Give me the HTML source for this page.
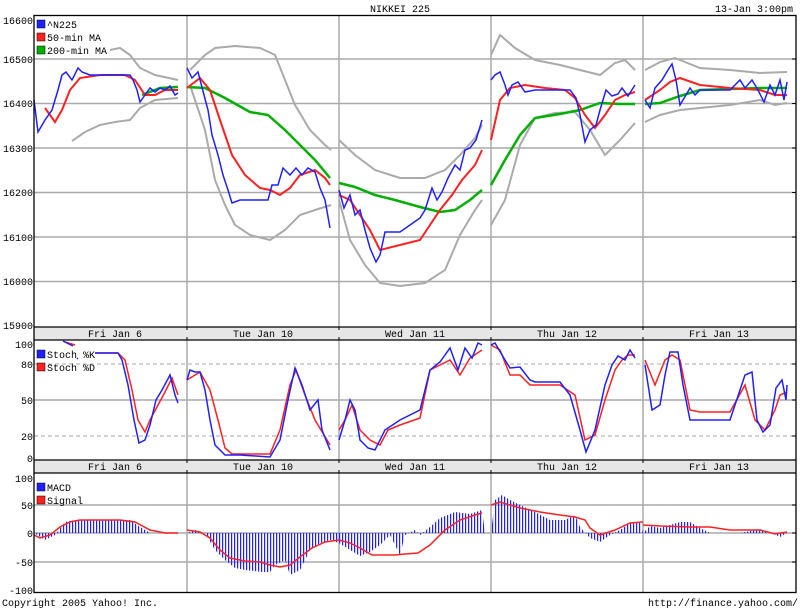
<!DOCTYPE html>
<html><head><meta charset="utf-8"><style>
html,body{margin:0;padding:0;background:#fff}
svg{display:block}
text{font-family:"Liberation Mono","DejaVu Sans Mono",monospace;font-size:10px;fill:#000}
</style></head><body>
<svg width="800" height="608" viewBox="0 0 800 608" xmlns="http://www.w3.org/2000/svg">
<defs>
<pattern id="bars" width="3" height="10" patternUnits="userSpaceOnUse"><rect x="0" y="0" width="1.2" height="10" fill="#2020ff"/></pattern>
</defs>
<text x="400" y="12" text-anchor="middle">NIKKEI 225</text>
<text x="793" y="12" text-anchor="end">13-Jan 3:00pm</text>

<g stroke="#aaa" stroke-width="1.5" fill="none">
<path d="M34 59H796M34 103.5H796M34 148H796M34 192.5H796M34 237H796M34 281.5H796"/>
<path d="M187 16V327M339 16V327M491 16V327M643 16V327"/>
<path d="M187 340V460M339 340V460M491 340V460M643 340V460M34 400H796"/>
<path d="M187 473V592M339 473V592M491 473V592M643 473V592M34 505H796M34 533H796M34 562H796"/>
</g>
<g stroke="#aaa" stroke-width="1" stroke-dasharray="4,3" fill="none"><path d="M34 364H796M34 436H796"/></g>

<rect x="34" y="327" width="762" height="13" fill="#e6e6e6"/>
<rect x="34" y="460" width="762" height="13" fill="#e6e6e6"/>
<g>
<text x="115" y="337" text-anchor="middle">Fri Jan  6</text><text x="263" y="337" text-anchor="middle">Tue Jan 10</text><text x="415" y="337" text-anchor="middle">Wed Jan 11</text><text x="567" y="337" text-anchor="middle">Thu Jan 12</text><text x="719" y="337" text-anchor="middle">Fri Jan 13</text>
<text x="115" y="470" text-anchor="middle">Fri Jan  6</text><text x="263" y="470" text-anchor="middle">Tue Jan 10</text><text x="415" y="470" text-anchor="middle">Wed Jan 11</text><text x="567" y="470" text-anchor="middle">Thu Jan 12</text><text x="719" y="470" text-anchor="middle">Fri Jan 13</text>
</g>

<g text-anchor="end">
<text x="33" y="24">16600</text><text x="33" y="63">16500</text><text x="33" y="107">16400</text><text x="33" y="152">16300</text><text x="33" y="196">16200</text><text x="33" y="241">16100</text><text x="33" y="285">16000</text><text x="33" y="329">15900</text>
<text x="33" y="348">100</text><text x="33" y="368">80</text><text x="33" y="404">50</text><text x="33" y="440">20</text><text x="33" y="462">0</text>
<text x="33" y="482">100</text><text x="33" y="509">50</text><text x="33" y="537">0</text><text x="33" y="566">-50</text><text x="33" y="594">-100</text>
</g>

<g stroke="#aaa" stroke-width="2" fill="none">
<path d="M72 141L85 132L100 125L115 122L130 120L140 108L155 100L178 98"/>
<path d="M110 50L120 48L130 55L140 68L155 75L178 80"/>
<path d="M190 70L205 55L215 48L235 46L260 48L275 55L285 80L295 105L310 130L325 145L331 150"/>
<path d="M190 85L205 130L215 180L225 205L235 225L250 235L270 240L285 230L300 215L315 210L331 205"/>
<path d="M339 140L355 155L375 170L400 178L425 178L445 170L460 155L475 138L482 125"/>
<path d="M339 200L350 240L365 265L380 283L400 286L425 283L445 270L460 235L475 210L482 200"/>
<path d="M491 55L500 35L515 48L535 60L560 65L580 70L600 75L615 63L625 60L635 70"/>
<path d="M491 225L505 200L520 145L535 118L555 113L575 112L590 130L605 155L620 140L635 123"/>
<path d="M645 70L660 62L675 58L700 68L730 70L760 73L787 72"/>
<path d="M645 122L660 115L680 110L700 108L730 105L760 100L775 105L787 103"/>
</g>
<g stroke="#00b000" stroke-width="2.5" fill="none">
<path d="M142 95L160 88L178 87"/>
<path d="M187 87L205 88L225 98L250 112L268 115L285 130L300 145L315 160L330 178"/>
<path d="M339 183L355 187L375 195L395 200L420 207L440 212L455 210L470 200L482 190"/>
<path d="M491 185L505 160L520 135L535 118L560 114L580 110L600 103L620 104L635 104"/>
<path d="M645 104L660 103L680 96L700 90L730 89L760 88L787 88"/>
</g>
<g stroke="#ff2020" stroke-width="2" fill="none">
<path d="M45 108L55 122L62 110L70 90L80 78L100 75L125 75L135 80L145 95L155 95L165 90L178 90"/>
<path d="M187 88L200 78L210 90L220 120L232 155L245 175L260 188L270 190L280 195L290 188L300 175L315 170L325 178L330 185"/>
<path d="M339 195L350 200L360 215L370 230L380 250L400 245L420 240L430 225L440 210L452 195L462 180L475 165L482 150"/>
<path d="M491 140L500 100L510 88L525 85L545 88L565 90L575 98L585 115L595 128L605 115L615 100L625 95L635 92"/>
<path d="M645 100L660 90L670 82L680 78L700 85L730 88L760 90L775 95L787 95"/>
</g>
<g stroke="#2020ff" stroke-width="1.5" fill="none">
<path d="M34 100L38 132L45 120L52 110L58 90L62 75L66 72L72 80L78 68L82 72L90 75L110 75L130 75L133 80L137 90L140 102L145 95L150 88L155 92L160 88L165 90L170 86L175 95L178 93"/>
<path d="M187 68L192 78L198 72L204 95L208 110L212 135L218 155L223 175L228 190L232 203L240 200L255 200L268 200L272 185L278 185L283 168L290 175L296 168L302 175L308 168L315 172L320 188L325 200L330 228"/>
<path d="M339 190L344 208L350 195L355 215L360 210L365 230L370 248L376 262L380 255L385 232L400 232L410 225L420 218L425 210L432 188L437 200L442 192L448 178L455 165L460 170L465 150L470 148L476 140L482 120"/>
<path d="M491 80L495 75L500 72L505 85L508 95L512 85L518 82L525 92L535 90L555 90L570 90L576 98L580 115L585 142L590 130L596 125L600 110L606 90L612 96L618 94L622 88L628 96L635 85"/>
<path d="M645 100L650 108L655 88L662 80L668 70L672 64L676 80L680 105L686 95L690 88L695 95L700 90L710 90L730 90L740 80L745 88L752 80L758 90L764 102L770 85L775 95L780 80L784 100L787 82"/>
</g>
<rect x="37" y="20" width="8" height="8" fill="#2020ff" stroke="#000" stroke-width="0.5"/><text x="47" y="28">^N225</text>
<rect x="37" y="33" width="8" height="8" fill="#ff2020" stroke="#000" stroke-width="0.5"/><text x="47" y="41">50-min MA</text>
<rect x="37" y="46" width="8" height="8" fill="#00b000" stroke="#000" stroke-width="0.5"/><text x="47" y="54">200-min MA</text>

<g stroke="#ff2020" stroke-width="1.5" fill="none">
<path d="M65 342L75 345M95 353L118 353L125 360L132 390L138 420L145 432L150 420L158 405L165 392L172 378L178 395"/>
<path d="M187 380L195 375L200 372L210 390L218 420L225 448L232 454L270 454L280 430L290 385L296 370L305 395L315 420L330 445"/>
<path d="M339 430L345 420L352 405L360 430L370 440L380 445L388 430L400 425L420 418L430 370L440 365L450 360L460 375L470 358L482 350"/>
<path d="M491 345L500 350L510 375L520 375L530 385L560 385L575 395L585 440L595 435L605 400L615 370L622 360L628 355L635 355"/>
<path d="M645 360L655 385L665 360L672 355L680 360L690 410L700 412L730 412L745 385L755 420L765 430L775 410L780 395L787 392"/>
</g>
<g stroke="#2020ff" stroke-width="1.5" fill="none">
<path d="M63 341L73 346M77 358L78 359M95 353L118 353L122 360L128 385L134 420L139 443L145 440L150 425L156 400L162 390L170 375L175 395L178 403"/>
<path d="M187 380L190 370L195 372L200 372L205 390L210 420L215 445L225 455L240 455L270 457L280 440L288 400L295 368L302 385L310 410L318 400L322 430L330 450"/>
<path d="M339 440L345 420L350 400L355 410L360 440L368 448L375 450L385 430L400 420L420 410L430 370L440 362L450 348L458 370L465 348L472 358L478 343L482 345"/>
<path d="M491 345L495 343L505 360L510 368L520 367L530 380L535 382L560 382L570 395L580 430L586 452L595 430L605 385L612 365L618 356L625 360L630 350L635 358"/>
<path d="M645 365L652 410L660 405L665 375L670 352L678 352L683 385L690 420L700 420L730 420L745 375L752 372L757 420L763 432L770 425L776 388L782 380L786 400L787 385"/>
</g>
<rect x="37" y="350" width="8" height="8" fill="#2020ff" stroke="#000" stroke-width="0.5"/><text x="47" y="358">Stoch %K</text>
<rect x="37" y="363" width="8" height="8" fill="#ff2020" stroke="#000" stroke-width="0.5"/><text x="47" y="371">Stoch %D</text>

<path fill="url(#bars)" d="M34 533L45 540L55 535L65 522L75 520L130 520L140 527L150 533L178 533Z"/>
<path fill="url(#bars)" d="M187 533L195 530L205 533L215 550L225 560L235 568L245 570L262 572L270 572L275 565L285 560L290 575L300 570L310 550L320 543L330 540L339 543L350 550L360 556L370 552L380 545L390 535L400 555L405 535L415 530L420 535L430 527L440 518L455 512L470 514L482 510L485 533Z"/>
<path fill="url(#bars)" d="M491 533L495 500L502 495L510 500L520 505L535 512L550 520L565 520L575 515L580 527L590 538L600 542L610 535L620 530L630 523L640 523L643 533Z"/>
<path fill="url(#bars)" d="M643 533L650 526L660 528L670 525L680 522L690 522L700 528L710 533L720 533L740 533L755 530L770 532L780 537L787 533Z"/>
<g stroke="#ff2020" stroke-width="1.5" fill="none">
<path d="M34 535L40 538L50 535L60 527L70 522L80 520L100 520L120 520L135 522L150 530L165 533L178 533"/>
<path d="M187 530L200 532L210 538L220 550L230 558L245 561L260 562L270 565L280 567L290 565L300 557L312 548L325 542L339 540L350 543L360 548L372 555L385 555L395 555L405 554L418 553L430 545L445 530L460 520L475 515L482 513"/>
<path d="M491 505L500 502L510 505L520 508L540 512L560 515L575 517L585 520L590 528L600 535L615 530L630 523L643 522"/>
<path d="M643 525L660 526L690 527L710 527L730 530L760 530L775 534L787 532"/>
</g>
<rect x="37" y="483" width="8" height="8" fill="#2020ff" stroke="#000" stroke-width="0.5"/><text x="47" y="491">MACD</text>
<rect x="37" y="496" width="8" height="8" fill="#ff2020" stroke="#000" stroke-width="0.5"/><text x="47" y="504">Signal</text>

<g stroke="#000" stroke-width="1.3" fill="none">
<rect x="34" y="15.5" width="762" height="577"/>
<path d="M34 327H796M34 340H796M34 460H796M34 473H796"/>
</g>
<g stroke="#000" stroke-width="1" fill="none">
<path d="M187 327v3M339 327v3M491 327v3M643 327v3M187 340v-3M339 340v-3M491 340v-3M643 340v-3M187 460v3M339 460v3M491 460v3M643 460v3M187 473v-3M339 473v-3M491 473v-3M643 473v-3"/>
<path d="M792 59h4M792 103.5h4M792 148h4M792 192.5h4M792 237h4M792 281.5h4M792 364h4M792 400h4M792 436h4M792 505h4M792 533h4M792 562h4"/>
</g>

<text x="2" y="606">Copyright 2005 Yahoo! Inc.</text>
<text x="798" y="606" text-anchor="end">http://finance.yahoo.com/</text>
</svg>
</body></html>
